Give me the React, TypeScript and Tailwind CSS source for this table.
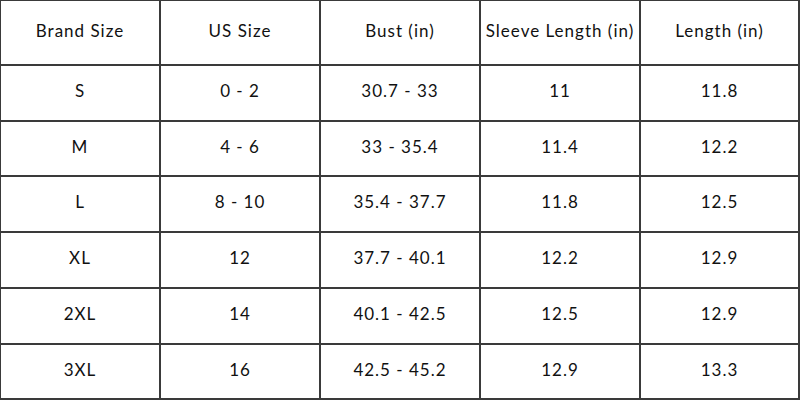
const headers = ['Brand Size', 'US Size', 'Bust (in)', 'Sleeve Length (in)', 'Length (in)']

const rows = [
  ['S', '0 - 2', '30.7 - 33', '11', '11.8'],
  ['M', '4 - 6', '33 - 35.4', '11.4', '12.2'],
  ['L', '8 - 10', '35.4 - 37.7', '11.8', '12.5'],
  ['XL', '12', '37.7 - 40.1', '12.2', '12.9'],
  ['2XL', '14', '40.1 - 42.5', '12.5', '12.9'],
  ['3XL', '16', '42.5 - 45.2', '12.9', '13.3'],
]

export default function App() {
  return (
    <div className="w-[800px] h-[400px] bg-white overflow-hidden">
      <div
        className="grid grid-cols-[160px_160px_160px_160px_159px] grid-rows-[65px_56px_55px_56px_56px_56px_55px] border-l border-t border-[#3a3a3a] text-[17px] text-[#111] tracking-[1px]"
        style={{ fontFamily: 'Lato, "Open Sans", sans-serif' }}
      >
        {[headers, ...rows].map((row, r) =>
          row.map((cell, c) => (
            <div
              key={`${r}-${c}`}
              className="flex items-center justify-center border-r-2 border-b-2 border-[#3a3a3a] pb-[4px]"
            >
              {cell}
            </div>
          ))
        )}
      </div>
    </div>
  )
}
